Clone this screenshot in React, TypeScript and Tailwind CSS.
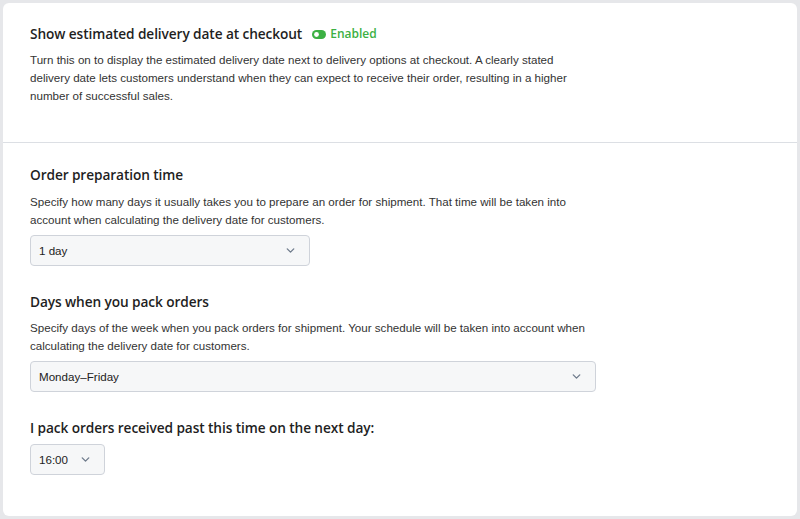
import { ChevronDown } from "lucide-react";

const body = "text-[11.6px] leading-[18px] text-[#333] whitespace-nowrap";
const title = "text-[13.7px] font-semibold text-[#1f1f1f] leading-[18px] tracking-[-0.1px]";
const heading = { fontFamily: '"Open Sans", sans-serif' };

function Select({ value, className }: { value: string; className: string }) {
  return (
    <div
      className={`flex items-center justify-between h-[31px] pl-[8px] pr-[12px] rounded-[4px] border border-[#cfd3da] bg-[#f6f7f8] text-[11.6px] text-[#222] ${className}`}
    >
      <span>{value}</span>
      <ChevronDown className="w-[13px] h-[13px] text-[#6f7c8c]" strokeWidth={2.5} />
    </div>
  );
}

function ToggleOn() {
  return (
    <svg width="14" height="9" viewBox="0 0 14 9" className="shrink-0">
      <rect x="0" y="0" width="14" height="9" rx="4.5" fill="#3cb043" />
      <circle cx="4.5" cy="4.5" r="2.4" fill="#fff" />
    </svg>
  );
}

export default function App() {
  return (
    <div
      className="w-[800px] h-[519px] bg-[#e6e7ea] p-[3px]"
      style={{ fontFamily: '"Liberation Sans", Arial, sans-serif' }}
    >
      <div className="h-full bg-white rounded-[6px] flex flex-col">
        <div className="px-[27px] pt-[22px] h-[140px] border-b border-[#dcdfe4]">
          <div className="flex items-center gap-[10px]" style={heading}>
            <h2 className={title}>Show estimated delivery date at checkout</h2>
            <div className="flex items-center gap-[4px] text-[12px] font-semibold text-[#3cb043]">
              <ToggleOn />
              <span>Enabled</span>
            </div>
          </div>
          <p className={`mt-[8px] ${body}`}>
            Turn this on to display the estimated delivery date next to delivery options at checkout. A clearly stated
            <br />
            delivery date lets customers understand when they can expect to receive their order, resulting in a higher
            <br />
            number of successful sales.
          </p>
        </div>

        <div className="px-[27px] pt-[23px]">
          <h3 className={title} style={heading}>
            Order preparation time
          </h3>
          <p className={`mt-[9px] ${body}`}>
            Specify how many days it usually takes you to prepare an order for shipment. That time will be taken into
            <br />
            account when calculating the delivery date for customers.
          </p>
          <Select value="1 day" className="mt-[6px] w-[280px]" />

          <h3 className={`mt-[27px] ${title}`} style={heading}>
            Days when you pack orders
          </h3>
          <p className={`mt-[8px] ${body}`}>
            Specify days of the week when you pack orders for shipment. Your schedule will be taken into account when
            <br />
            calculating the delivery date for customers.
          </p>
          <Select value="Monday–Friday" className="mt-[6px] w-[566px]" />

          <h3 className={`mt-[27px] ${title}`} style={heading}>
            I pack orders received past this time on the next day:
          </h3>
          <Select value="16:00" className="mt-[7px] w-[75px]" />
        </div>
      </div>
    </div>
  );
}
